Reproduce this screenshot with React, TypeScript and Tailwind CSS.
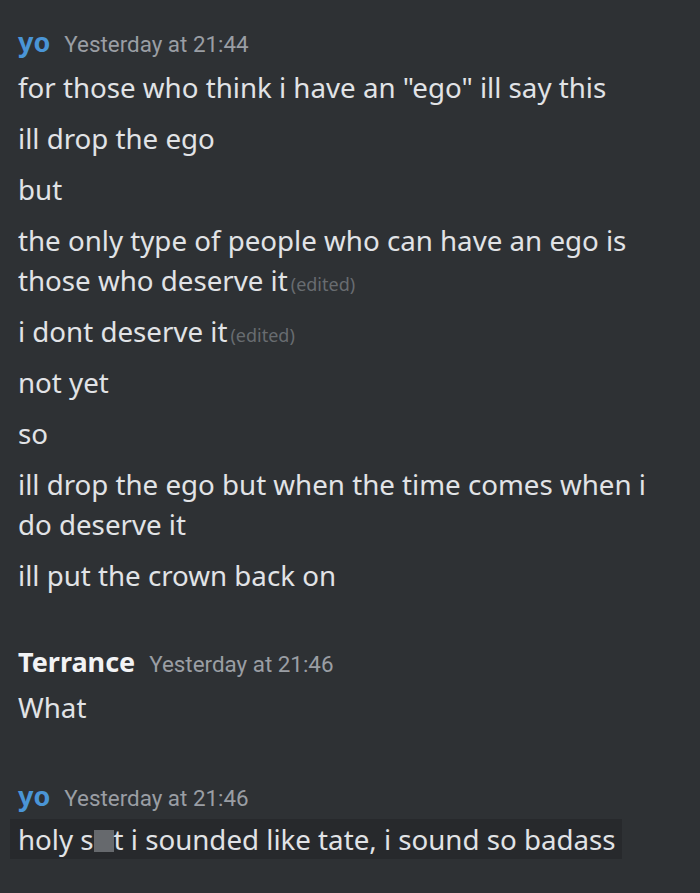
import React from "react";

const Edited = () => (
  <span className="ml-[3px] text-[18px] leading-none text-[#686c70] align-baseline">(edited)</span>
);

const Header = ({ name, color, time }: { name: string; color: string; time: string }) => (
  <div className="flex items-baseline gap-[14px] h-[40px] leading-[40px]">
    <span className={`font-bold text-[27px] ${color}`} style={{ fontFamily: "'Noto Sans', sans-serif" }}>{name}</span>
    <span className="text-[22.4px] text-[#9a9ea4]" style={{ fontFamily: "Roboto, sans-serif" }}>{time}</span>
  </div>
);

export default function App() {
  return (
    <div className="w-[700px] h-[893px] bg-[#2e3134] overflow-hidden pl-[18px] pr-[20px] pt-[22px] text-[#e1e3e6] text-[27.7px] leading-[40px]" style={{ fontFamily: "'Noto Sans', sans-serif" }}>
      <Header name="yo" color="text-[#4a95d6]" time="Yesterday at 21:44" />
      <div className="mt-[5px] flex flex-col gap-[11px]">
        <p>for those who think i have an "ego" ill say this</p>
        <p>ill drop the ego</p>
        <p>but</p>
        <p>the only type of people who can have an ego is those who deserve it<Edited /></p>
        <p>i dont deserve it<Edited /></p>
        <p>not yet</p>
        <p>so</p>
        <p>ill drop the ego but when the time comes when i do deserve it</p>
        <p>ill put the crown back on</p>
      </div>
      <div className="mt-[47px]">
        <Header name="Terrance" color="text-[#f2f3f5]" time="Yesterday at 21:46" />
        <p className="mt-[5px]">What</p>
      </div>
      <div className="mt-[49px]">
        <Header name="yo" color="text-[#4a95d6]" time="Yesterday at 21:46" />
        <div className="mt-[3px] -ml-[8px] w-fit bg-[#27292c] pl-[8px] pr-[6px]">
          <p>
            holy s<span className="inline-block w-[20px] h-[22px] bg-[#66696d] align-[-2px]" />t i sounded like tate, i sound so badass
          </p>
        </div>
      </div>
    </div>
  );
}
